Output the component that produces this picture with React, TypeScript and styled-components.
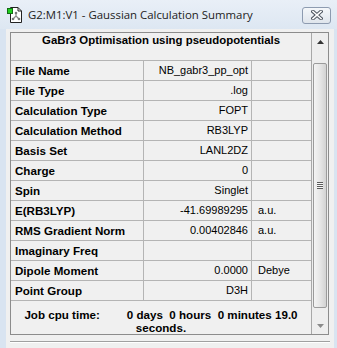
import React from 'react';
import styled, { createGlobalStyle } from 'styled-components';

const GlobalStyle = createGlobalStyle`
  html, body {
    margin: 0;
    padding: 0;
    background: #dbe5f1;
  }
`;

const rows: [string, string, string][] = [
  ['File Name', 'NB_gabr3_pp_opt', ''],
  ['File Type', '.log', ''],
  ['Calculation Type', 'FOPT', ''],
  ['Calculation Method', 'RB3LYP', ''],
  ['Basis Set', 'LANL2DZ', ''],
  ['Charge', '0', ''],
  ['Spin', 'Singlet', ''],
  ['E(RB3LYP)', '-41.69989295', 'a.u.'],
  ['RMS Gradient Norm', '0.00402846', 'a.u.'],
  ['Imaginary Freq', '', ''],
  ['Dipole Moment', '0.0000', 'Debye'],
  ['Point Group', 'D3H', ''],
];

const Window = styled.div`
  width: 337px;
  height: 348px;
  display: flex;
  flex-direction: column;
  overflow: hidden;
  background: #d9e4f1;
`;

const TitleBar = styled.div`
  height: 29px;
  flex: none;
  display: flex;
  align-items: center;
  padding-left: 7px;
  background: linear-gradient(#e9eff7, #dde7f2);
`;

const TitleText = styled.span`
  margin-left: 5px;
  font-family: 'Open Sans', 'Liberation Sans', sans-serif;
  font-size: 11.4px;
  color: #222;
  white-space: nowrap;
`;

const CloseButton = styled.div`
  margin-left: auto;
  margin-right: 6px;
  margin-top: 1px;
  width: 27px;
  height: 15px;
  border: 1px solid #8d9bb0;
  border-radius: 3px;
  background: linear-gradient(#f4f7fa, #dfe5ec);
  display: flex;
  align-items: center;
  justify-content: center;
`;

const Client = styled.div`
  flex: 1;
  margin: 0 3px 0 6px;
  padding: 3px 5px 0 4px;
  background: #f0f0f0;
`;

const SummaryBox = styled.div`
  height: 301px;
  border: 1px solid #8c8c8c;
  display: flex;
  font-family: 'Liberation Sans', Arial, sans-serif;
  color: #000;
`;

const TableArea = styled.div`
  width: 300px;
  display: flex;
  flex-direction: column;
`;

const Header = styled.div`
  height: 27px;
  text-align: center;
  font-weight: bold;
  font-size: 11.4px;
  line-height: 14px;
`;

const Row = styled.div`
  height: 19px;
  border-top: 1px solid #b4b4b4;
  display: flex;
  line-height: 19px;
`;

const LabelCell = styled.div`
  width: 128px;
  padding-left: 4px;
  font-weight: bold;
  font-size: 11.6px;
  white-space: nowrap;
`;

const ValueCell = styled.div`
  width: 104px;
  padding-right: 3px;
  border-left: 1px solid #b4b4b4;
  text-align: right;
  font-size: 11px;
  white-space: nowrap;
`;

const UnitCell = styled.div`
  flex: 1;
  padding-left: 6px;
  border-left: 1px solid #b4b4b4;
  font-size: 11px;
`;

const CpuRow = styled.div`
  height: 25px;
  padding-top: 8px;
  border-top: 1px solid #b4b4b4;
  font-weight: bold;
  font-size: 11.6px;
  line-height: 12.5px;
`;

const CpuLine = styled.div`
  display: flex;
  justify-content: center;
  gap: 27px;
  white-space: pre;
`;

const ScrollBar = styled.div`
  width: 16px;
  border-left: 1px solid #a8a8a8;
  display: flex;
  flex-direction: column;
  background: #eeeeee;
`;

const ArrowButton = styled.div`
  height: 17px;
  display: flex;
  align-items: center;
  justify-content: center;
`;

const Track = styled.div`
  flex: 1;
  display: flex;
  padding: 13px 1px 9px 1px;
`;

const Thumb = styled.div`
  flex: 1;
  border: 1px solid #9b9b9b;
  border-radius: 2px;
  background: linear-gradient(90deg, #f4f4f4, #e6e6e6 50%, #d3d3d3);
  display: flex;
  align-items: center;
  justify-content: center;
`;

const Grip = styled.div`
  width: 6px;
  height: 7px;
  background: repeating-linear-gradient(#5c5c5c 0 1px, #f7f7f7 1px 2px);
`;

const Separator = styled.div`
  margin-top: 6px;
  margin-right: -1px;
  border-top: 1px solid #a0a0a0;
  border-bottom: 1px solid #ffffff;
`;

const AppIcon = () => (
  <svg width="16" height="16" viewBox="0 0 16 16">
    <path d="M3.5 0.5 H11 L14.5 4 V15.5 H3.5 Z" fill="#fff" stroke="#222" />
    <path d="M11 0.5 V4 H14.5" fill="none" stroke="#222" />
    <path d="M9 6 V9 M9 9 L6 12 M9 9 L12 12" stroke="#8a8a8a" strokeWidth="1.2" fill="none" />
    <circle cx="9" cy="6" r="1.3" fill="#777" />
    <circle cx="6" cy="12" r="1.3" fill="#777" />
    <circle cx="12" cy="12" r="1.3" fill="#777" />
    <rect x="0.5" y="1.5" width="5" height="5" fill="#1fd01f" stroke="#146b14" />
  </svg>
);

const CloseGlyph = () => (
  <svg width="12" height="10" viewBox="0 0 12 10">
    <path d="M2 1.5 L10 8.5 M10 1.5 L2 8.5" stroke="#4e5660" strokeWidth="3.6" strokeLinecap="square" />
    <path d="M2 1.5 L10 8.5 M10 1.5 L2 8.5" stroke="#ffffff" strokeWidth="1.6" strokeLinecap="square" />
  </svg>
);

const Arrow = ({ up, color }: { up?: boolean; color: string }) => (
  <svg width="7" height="4" viewBox="0 0 7 4">
    <path d={up ? 'M0 4 L3.5 0 L7 4 Z' : 'M0 0 L7 0 L3.5 4 Z'} fill={color} />
  </svg>
);

const App: React.FC = () => {
  return (
    <>
      <GlobalStyle />
      <Window>
        <TitleBar>
          <AppIcon />
          <TitleText>G2:M1:V1 - Gaussian Calculation Summary</TitleText>
          <CloseButton>
            <CloseGlyph />
          </CloseButton>
        </TitleBar>
        <Client>
          <SummaryBox>
            <TableArea>
              <Header>GaBr3 Optimisation using pseudopotentials</Header>
              {rows.map(([label, value, unit]) => (
                <Row key={label}>
                  <LabelCell>{label}</LabelCell>
                  <ValueCell>{value}</ValueCell>
                  <UnitCell>{unit}</UnitCell>
                </Row>
              ))}
              <CpuRow>
                <CpuLine>
                  <span>Job cpu time:</span>
                  <span>0 days  0 hours  0 minutes 19.0</span>
                </CpuLine>
                <CpuLine>seconds.</CpuLine>
              </CpuRow>
            </TableArea>
            <ScrollBar>
              <ArrowButton>
                <Arrow up color="#333" />
              </ArrowButton>
              <Track>
                <Thumb>
                  <Grip />
                </Thumb>
              </Track>
              <ArrowButton>
                <Arrow color="#8a8a8a" />
              </ArrowButton>
            </ScrollBar>
          </SummaryBox>
          <Separator />
        </Client>
      </Window>
    </>
  );
};

export default App;
